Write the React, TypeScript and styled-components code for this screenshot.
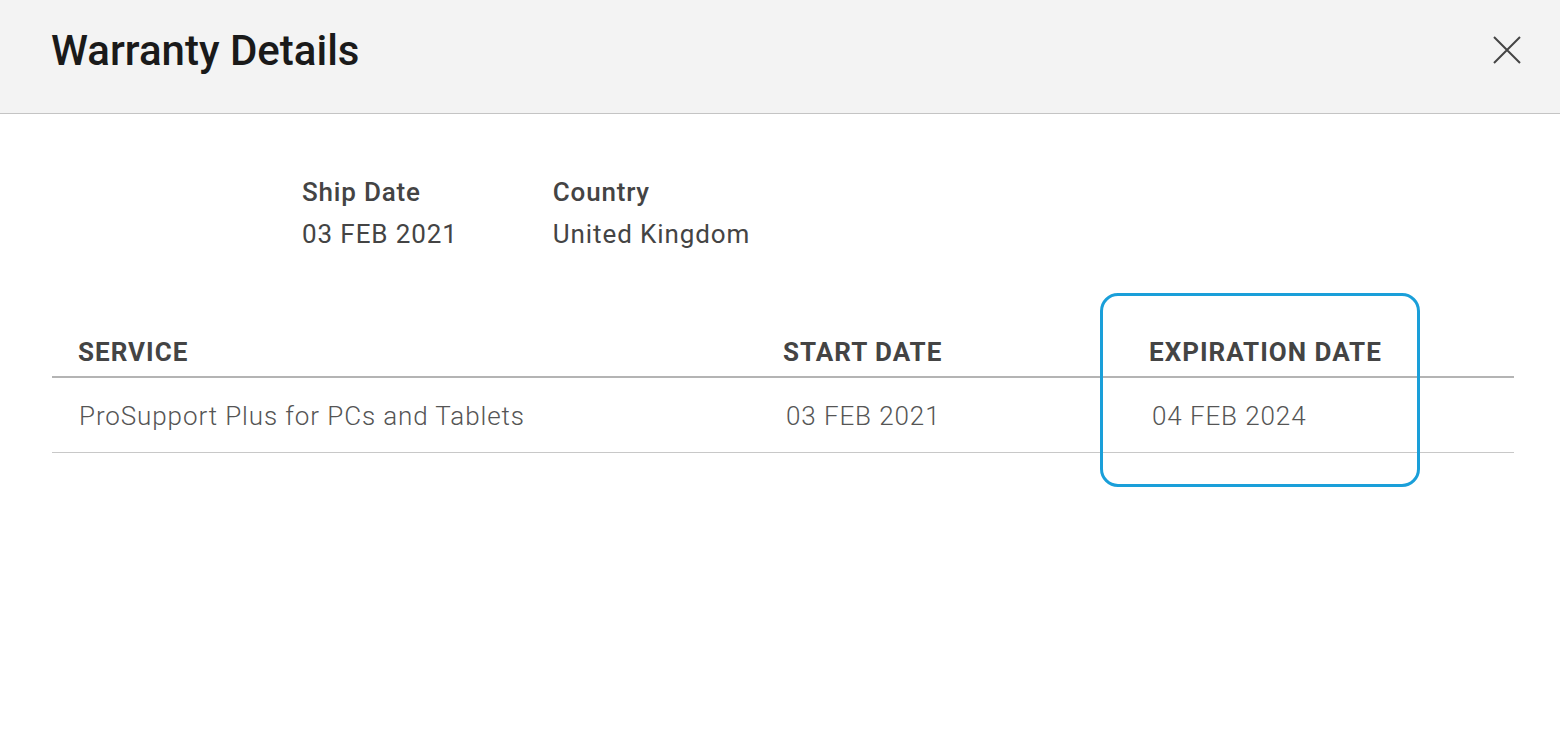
import React from "react";
import styled, { createGlobalStyle } from "styled-components";

const GlobalStyle = createGlobalStyle`
  html, body {
    margin: 0;
    padding: 0;
    background: #fff;
    font-family: Roboto, "Liberation Sans", sans-serif;
  }
`;

type Row = {
  service: string;
  start: string;
  expiration: string;
};

const rows: Row[] = [
  {
    service: "ProSupport Plus for PCs and Tablets",
    start: "03 FEB 2021",
    expiration: "04 FEB 2024",
  },
];

const App: React.FC = () => {
  return (
    <>
      <GlobalStyle />
      <Modal>
        <Header>
          <Title>Warranty Details</Title>
          <CloseButton aria-label="Close">
            <svg width="30" height="30" viewBox="0 0 30 30">
              <path d="M2 2 L28 28 M28 2 L2 28" stroke="#444" strokeWidth="2" fill="none" />
            </svg>
          </CloseButton>
        </Header>
        <Body>
          <Summary>
            <Field>
              <FieldLabel>Ship Date</FieldLabel>
              <FieldValue>03 FEB 2021</FieldValue>
            </Field>
            <Field>
              <FieldLabel>Country</FieldLabel>
              <FieldValue>United Kingdom</FieldValue>
            </Field>
          </Summary>
          <TableWrap>
            <Highlight />
            <Table>
              <thead>
                <tr>
                  <Th $width={679}>SERVICE</Th>
                  <Th $width={340}>START DATE</Th>
                  <Th>EXPIRATION DATE</Th>
                </tr>
              </thead>
              <tbody>
                {rows.map((r) => (
                  <tr key={r.service}>
                    <Td>{r.service}</Td>
                    <Td $shift={2}>{r.start}</Td>
                    <Td $shift={2}>{r.expiration}</Td>
                  </tr>
                ))}
              </tbody>
            </Table>
          </TableWrap>
        </Body>
      </Modal>
    </>
  );
};

export default App;

const Modal = styled.div`
  width: 1560px;
  height: 744px;
  background: #fff;
`;

const Header = styled.header`
  height: 114px;
  box-sizing: border-box;
  background: #f3f3f3;
  border-bottom: 1px solid #c4c4c4;
  display: flex;
  align-items: center;
  justify-content: space-between;
  padding: 0 38px 0 51px;
`;

const Title = styled.h1`
  margin: 0;
  font-size: 42px;
  font-weight: 500;
  color: #1a1a1a;
  position: relative;
  top: -6px;
`;

const CloseButton = styled.button`
  border: none;
  background: transparent;
  padding: 0;
  display: flex;
  cursor: pointer;
  position: relative;
  top: -7px;
`;

const Body = styled.div`
  padding: 0 46px 0 52px;
`;

const Summary = styled.div`
  display: flex;
  gap: 95px;
  padding: 59px 0 0 250px;
  height: 176px;
  box-sizing: border-box;
`;

const Field = styled.div`
  display: flex;
  flex-direction: column;
  gap: 4px;
`;

const FieldLabel = styled.span`
  font-size: 26px;
  font-weight: 500;
  color: #444;
  line-height: 38px;
  letter-spacing: 0.8px;
`;

const FieldValue = styled.span`
  font-size: 26px;
  font-weight: 400;
  color: #444;
  line-height: 38px;
  letter-spacing: 0.9px;
`;

const TableWrap = styled.div`
  position: relative;
  padding-top: 38px;
`;

const Highlight = styled.div`
  position: absolute;
  left: 1048px;
  top: 3px;
  width: 320px;
  height: 194px;
  box-sizing: border-box;
  border: 3px solid #1a9fd9;
  border-radius: 18px;
  pointer-events: none;
`;

const Table = styled.table`
  width: 1462px;
  border-collapse: collapse;
`;

const Th = styled.th<{ $width?: number }>`
  text-align: left;
  font-size: 26px;
  font-weight: 700;
  color: #444;
  padding: 6px 0 6px 26px;
  line-height: 36px;
  letter-spacing: 1px;
  width: ${(p) => (p.$width ? `${p.$width}px` : "auto")};
  border-bottom: 2px solid #b4b4b4;
`;

const Td = styled.td<{ $shift?: number }>`
  font-size: 26px;
  font-weight: 300;
  color: #555;
  padding: 20px 0 18px ${(p) => 27 + (p.$shift ?? 0)}px;
  line-height: 36px;
  letter-spacing: 0.9px;
  border-bottom: 1px solid #c8c8c8;
`;
